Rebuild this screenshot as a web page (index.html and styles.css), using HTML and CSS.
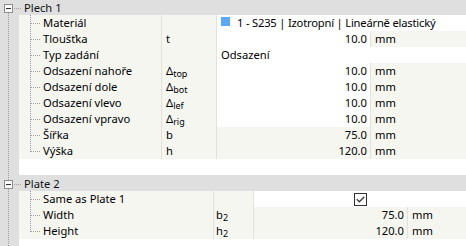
FILE: index.html
```html
<!DOCTYPE html>
<html lang="cs">
<head>
<meta charset="utf-8">
<title>Plech</title>
<link rel="stylesheet" href="styles.css">
</head>
<body>
<div class="tree">
  <section class="group first">
    <div class="head"><span class="toggle"></span><span class="conn"></span><span class="title">Plech 1</span></div>
    <div class="rows plech">
      <div class="row"><div class="name">Materiál</div><div class="sym"></div><div class="val wide material"><span class="swatch"></span>1 - S235 | Izotropní | Lineárně elastický</div></div>
      <div class="row"><div class="name">Tloušťka</div><div class="sym">t</div><div class="val num">10.0</div><div class="unit">mm</div></div>
      <div class="row"><div class="name">Typ zadání</div><div class="sym"></div><div class="val wide">Odsazení</div></div>
      <div class="row"><div class="name">Odsazení nahoře</div><div class="sym">Δ<sub>top</sub></div><div class="val num">10.0</div><div class="unit">mm</div></div>
      <div class="row"><div class="name">Odsazení dole</div><div class="sym">Δ<sub>bot</sub></div><div class="val num">10.0</div><div class="unit">mm</div></div>
      <div class="row"><div class="name">Odsazení vlevo</div><div class="sym">Δ<sub>lef</sub></div><div class="val num">10.0</div><div class="unit">mm</div></div>
      <div class="row"><div class="name">Odsazení vpravo</div><div class="sym">Δ<sub>rig</sub></div><div class="val num">10.0</div><div class="unit">mm</div></div>
      <div class="row"><div class="name">Šířka</div><div class="sym">b</div><div class="val num ro">75.0</div><div class="unit">mm</div></div>
      <div class="row last"><div class="name">Výška</div><div class="sym">h</div><div class="val num ro">120.0</div><div class="unit">mm</div></div>
    </div>
  </section>
  <section class="group">
    <div class="head"><span class="toggle"></span><span class="conn"></span><span class="title">Plate 2</span></div>
    <div class="rows plate">
      <div class="row"><div class="name">Same as Plate 1</div><div class="sym"></div><div class="val wide check-cell"><span class="check"><svg width="9" height="7" viewBox="0 0 9 7"><path d="M0.8 3.2 L3.4 5.8 L8.3 0.8" fill="none" stroke="#3a3a3a" stroke-width="1.3"/></svg></span></div></div>
      <div class="row"><div class="name">Width</div><div class="sym">b<sub>2</sub></div><div class="val num ro">75.0</div><div class="unit">mm</div></div>
      <div class="row last"><div class="name">Height</div><div class="sym">h<sub>2</sub></div><div class="val num ro">120.0</div><div class="unit">mm</div></div>
    </div>
  </section>
</div>
</body>
</html>
```

FILE: styles.css
```css
html, body {
  margin: 0;
  padding: 0;
  background: #ffffff;
}

body {
  font-family: "Noto Sans", "Open Sans", sans-serif;
  font-size: 11.2px;
  color: #000;
  width: 466px;
  height: 246px;
  overflow: hidden;
}

.tree {
  margin-top: -1px;
}

.group {
  padding-left: 19px;
  padding-bottom: 16px;
  background:
    repeating-linear-gradient(to bottom, #9c9c9c 0 1px, transparent 1px 2px) 8px 0 / 1px 100% no-repeat,
    linear-gradient(#dfdfdf, #dfdfdf) 0 0 / 19px 100% no-repeat,
    #ffffff;
}

.head {
  margin-left: -19px;
  height: 16px;
  display: flex;
  align-items: flex-start;
  background:
    repeating-linear-gradient(to bottom, #9c9c9c 0 1px, transparent 1px 2px) 8px 0 / 1px 100% no-repeat,
    #dfdfdf;
}

.first .head {
  background:
    repeating-linear-gradient(to bottom, #9c9c9c 0 1px, transparent 1px 2px) 8px 14px / 1px 2px no-repeat,
    #dfdfdf;
}

.toggle {
  box-sizing: border-box;
  width: 9px;
  height: 9px;
  margin: 5px 0 0 4px;
  border: 1px solid #8e8e8e;
  background:
    linear-gradient(#2e2e2e, #2e2e2e) center / 5px 1px no-repeat,
    #fbfbfb;
}

.conn {
  width: 8px;
  height: 1px;
  margin-top: 9px;
  background: repeating-linear-gradient(to right, transparent 0 1px, #9c9c9c 1px 2px);
}

.title {
  margin-left: 3px;
  line-height: 16px;
  padding-top: 1px;
  color: #111;
}

.rows .row {
  display: grid;
  height: 16px;
  line-height: 16px;
}

.plech .row {
  grid-template-columns: 142px 55px 154px 1fr;
}

.plate .row {
  grid-template-columns: 194px 40px 154px 1fr;
}

.row > div {
  background-color: #f6f6f1;
  white-space: nowrap;
  overflow: hidden;
}

.row > .sym {
  overflow: visible;
}

.name {
  padding-left: 24px;
  background-image:
    repeating-linear-gradient(to bottom, #9c9c9c 0 1px, transparent 1px 2px),
    repeating-linear-gradient(to right, #9c9c9c 0 1px, transparent 1px 2px);
  background-position: 11px 0, 12px 8px;
  background-size: 1px 100%, 9px 1px;
  background-repeat: no-repeat;
}

.row.last .name {
  background-size: 1px 9px, 9px 1px;
}

.sym {
  border-left: 1px solid #e2e2dc;
  padding-left: 4px;
}

.plate .sym {
  padding-left: 2px;
}

sub {
  font-size: 9px;
  line-height: 0;
  vertical-align: -2px;
}

.val {
  border-left: 1px solid #e2e2dc;
}

.row > .val {
  background-color: #ffffff;
}

.row > .val.ro {
  background-color: #f6f6f1;
}

.val.wide {
  grid-column: 3 / 5;
  padding-left: 4px;
  display: flex;
  align-items: center;
}

.material {
  letter-spacing: -0.2px;
}

.num {
  text-align: right;
  padding-right: 3px;
}

.unit {
  border-left: 1px solid #e2e2dc;
  padding-left: 4px;
}

.swatch {
  width: 9px;
  height: 9px;
  margin: -3px 7px 0 0;
  background: #5aa8f6;
  flex: none;
}

.check-cell {
  justify-content: center;
}

.val.check-cell {
  padding-left: 0;
}

.check {
  box-sizing: border-box;
  width: 13px;
  height: 13px;
  border: 1px solid #333;
  background: #fff;
  display: flex;
  align-items: center;
  justify-content: center;
}

.check svg {
  display: block;
}
```
